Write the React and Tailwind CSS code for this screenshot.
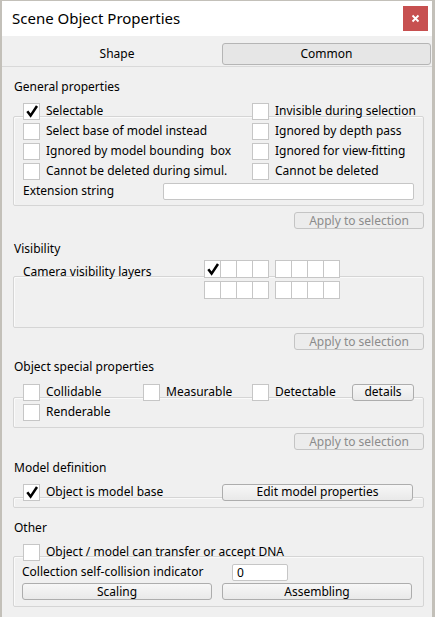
import React from "react";

const Check = () => (
  <svg width="14" height="14" viewBox="0 0 14 14" className="block">
    <path d="M2.3 7.2 L5.6 11.6 L12 2" fill="none" stroke="#000" strokeWidth="2.5" strokeLinejoin="miter" />
  </svg>
);

const CheckBox = ({ checked }) => (
  <div className="w-[17px] h-[17px] bg-white border border-[#c6c6c6] flex items-center justify-center shrink-0">
    {checked && <Check />}
  </div>
);

const CheckItem = ({ label, checked, className = "" }) => (
  <div className={`flex items-center h-[20px] gap-[6px] ${className}`}>
    <CheckBox checked={checked} />
    <span className="whitespace-pre">{label}</span>
  </div>
);

const Button = ({ children, disabled, className = "" }) => (
  <div
    className={`h-[17px] flex items-center justify-center rounded-[3px] border leading-none whitespace-nowrap ${
      disabled
        ? "border-[#c4c4c4] text-[#8b8b8b] bg-[#ececec]"
        : "border-[#adadad] text-black bg-gradient-to-b from-[#f7f7f7] to-[#e9e9e9]"
    } ${className}`}
  >
    {children}
  </div>
);

const SectionTitle = ({ children, className = "" }) => (
  <div className={`h-[20px] leading-[20px] pl-[1px] ${className}`}>{children}</div>
);

const Box = ({ children, className = "" }) => (
  <div className={`border border-[#d5d5d5] shadow-[inset_1px_1px_0_#fafafa] rounded-[2px] ${className}`}>{children}</div>
);

const ApplyRow = ({ className = "" }) => (
  <div className={`flex justify-end ${className}`}>
    <Button disabled className="w-[130px]">Apply to selection</Button>
  </div>
);

const LayerGrid = ({ first }) => (
  <div className="flex gap-[6px]">
    {[0, 1].map((g) => (
      <div key={g} className="flex bg-white border-l border-t border-[#c6c6c6]">
        {[0, 1, 2, 3].map((c) => (
          <div key={c} className="w-[16px] h-[17px] border-r border-b border-[#c6c6c6] flex items-center justify-center">
            {first && g === 0 && c === 0 && <Check />}
          </div>
        ))}
      </div>
    ))}
  </div>
);

export default function App() {
  return (
    <div
      className="w-[435px] h-[617px] bg-[#c3c0b9] pl-[2px] pr-[3px] pt-[1px] overflow-hidden text-[12px] text-black"
      style={{ fontFamily: '"Segoe UI", "Noto Sans", sans-serif' }}
    >
      <div className="bg-[#f0f0f0] h-[620px] flex flex-col">
        {/* title bar */}
        <div className="h-[35px] bg-white flex items-center justify-between pl-[10px] pr-[4px]">
          <span className="text-[15px] pb-[1px]">Scene Object Properties</span>
          <div className="w-[25px] h-[25px] bg-[#c75050] flex items-center justify-center">
            <svg width="9" height="9" viewBox="0 0 9 9">
              <path d="M1.5 1.5 L7.5 7.5 M7.5 1.5 L1.5 7.5" stroke="#fff" strokeWidth="1.8" />
            </svg>
          </div>
        </div>

        {/* tabs */}
        <div className="h-[31px] border-b border-[#d9d9d9] flex items-start pt-[7px] pl-[10px] pr-[1px]">
          <div className="w-[210px] h-[22px] flex items-center justify-center">Shape</div>
          <div className="flex-1 h-[22px] flex items-center justify-center border border-[#b5b5b5] rounded-[3px] bg-[#e6e6e6]">
            Common
          </div>
        </div>

        {/* content */}
        <div className="pl-[11px] pr-[8px] flex flex-col">
          {/* General properties */}
          <SectionTitle className="mt-[10px]">General properties</SectionTitle>
          <div className="relative z-10 mt-[4px] grid grid-cols-[229px_1fr] pl-[10px]">
            <CheckItem label="Selectable" checked />
            <CheckItem label="Invisible during selection" />
          </div>
          <Box className="-mt-[5px] pt-[4px] pb-[4px] pl-[9px] pr-[9px]">
            <div className="grid grid-cols-[229px_1fr]">
              <CheckItem label="Select base of model instead" />
              <CheckItem label="Ignored by depth pass" />
              <CheckItem label="Ignored by model bounding  box" />
              <CheckItem label="Ignored for view-fitting" />
              <CheckItem label="Cannot be deleted during simul." />
              <CheckItem label="Cannot be deleted" />
            </div>
            <div className="flex items-center h-[20px]">
              <span className="w-[140px]">Extension string</span>
              <div className="w-[251px] h-[17px] bg-white border border-[#c6c6c6] rounded-[2px]" />
            </div>
          </Box>
          <ApplyRow className="mt-[6px]" />

          {/* Visibility */}
          <SectionTitle className="mt-[10px]">Visibility</SectionTitle>
          <div className="relative z-10 mt-[1px] flex items-start pl-[10px]">
            <span className="w-[181px] h-[20px] leading-[20px] mt-[2px]">Camera visibility layers</span>
            <div className="flex flex-col gap-[3px]">
              <LayerGrid first />
              <LayerGrid />
            </div>
          </div>
          <Box className="-mt-[23px] h-[52px]" />
          <ApplyRow className="mt-[5px]" />

          {/* Object special properties */}
          <SectionTitle className="mt-[7px]">Object special properties</SectionTitle>
          <div className="relative z-10 mt-[5px] flex items-center pl-[10px]">
            <CheckItem label="Collidable" className="w-[120px]" />
            <CheckItem label="Measurable" className="w-[109px]" />
            <CheckItem label="Detectable" className="w-[100px]" />
            <Button className="w-[62px]">details</Button>
          </div>
          <Box className="-mt-[5px] pt-[4px] pb-[5px] pl-[9px]">
            <CheckItem label="Renderable" />
          </Box>
          <ApplyRow className="mt-[5px]" />

          {/* Model definition */}
          <SectionTitle className="mt-[8px]">Model definition</SectionTitle>
          <div className="relative z-10 mt-[4px] flex items-center pl-[10px]">
            <CheckItem label="Object is model base" checked className="w-[199px]" />
            <Button className="w-[191px]">Edit model properties</Button>
          </div>
          <Box className="-mt-[5px] h-[11px]" />

          {/* Other */}
          <SectionTitle className="mt-[10px]">Other</SectionTitle>
          <div className="relative z-10 mt-[4px] flex items-center pl-[10px]">
            <CheckItem label="Object / model can transfer or accept DNA" />
          </div>
          <Box className="-mt-[6px] pt-[5px] pb-[6px] pl-[8px] pr-[10px]">
            <div className="flex items-center h-[20px]">
              <span className="w-[210px]">Collection self-collision indicator</span>
              <div className="w-[56px] h-[17px] bg-white border border-[#c6c6c6] rounded-[2px] pl-[4px] leading-[15px]">
                0
              </div>
            </div>
            <div className="flex gap-[10px] mt-[1px]">
              <Button className="w-[190px]">Scaling</Button>
              <Button className="w-[190px]">Assembling</Button>
            </div>
          </Box>
        </div>
      </div>
    </div>
  );
}
